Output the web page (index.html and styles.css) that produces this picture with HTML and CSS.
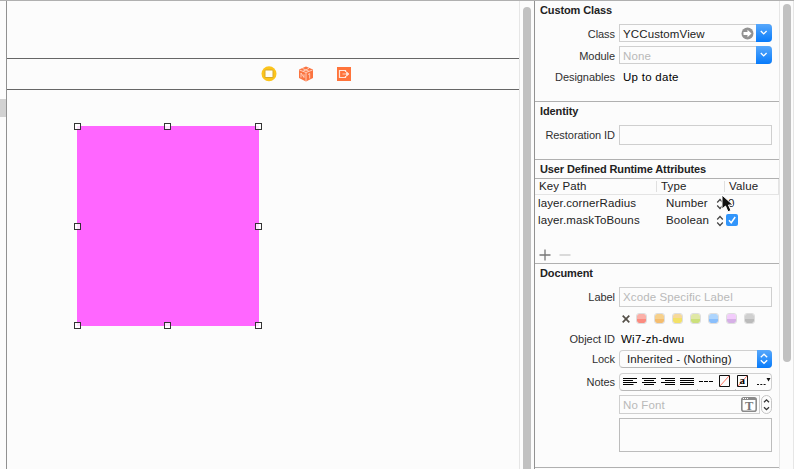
FILE: index.html
```html
<!DOCTYPE html>
<html lang="en">
<head>
<meta charset="utf-8">
<title>Identity inspector</title>
<link rel="stylesheet" href="styles.css">
</head>
<body>
<div class="window">
  <aside class="gutter"><div class="gutter-mark"></div></aside>
  <main class="canvas">
    <div class="scene-bar">
      <svg width="16" height="16" viewBox="0 0 16 16"><circle cx="8" cy="7.700" r="7.500" fill="#fcc41c"/><rect x="3.500" y="3.500" width="9" height="8.500" rx="1.500" fill="#d8a928"/><rect x="4.500" y="4.500" width="7" height="6.500" fill="#fffdf5"/></svg>
      <svg width="16" height="16" viewBox="0 0 16 16"><path d="M8 .5 15 3.500v8.500L8 15.500 1 12V3.500z" fill="#fb7440"/><path d="M1.500 4 8 6.500 14.500 4M8 6.500V15M4.500 2.500l6.500 2.800M11 2.300 5 5.300M3 7v4.500M3 7l3 4.500V8.300M10 8.500l1.700-1v5" fill="none" stroke="#ffd6c4" stroke-width=".9"/></svg>
      <svg width="16" height="16" viewBox="0 0 16 16"><path d="M1 1h14v14H1z" fill="#ff743b"/><path d="M9.500 6V4.500h-6v7h6V10" fill="none" stroke="#ffe4d8" stroke-width="1.200"/><path d="M6.500 8H12M10.500 5.800 13 8l-2.500 2.200z" fill="#ffe4d8" stroke="#ffe4d8" stroke-width=".8"/></svg>
    </div>
    <div class="stage">
      <div class="view">
        <i class="h tl"></i><i class="h tc"></i><i class="h tr"></i>
        <i class="h ml"></i><i class="h mr"></i>
        <i class="h bl"></i><i class="h bc"></i><i class="h br"></i>
      </div>
    </div>
  </main>
  <div class="scroll canvas-scroll"><div class="thumb"></div></div>
  <section class="inspector">
    <div class="section custom">
      <h2>Custom Class</h2>
      <div class="row class-row"><label>Class</label>
        <div class="combo"><span>YCCustomView</span>
          <svg class="go" width="13" height="13" viewBox="0 0 13 13"><circle cx="6.500" cy="6.500" r="6" fill="#929292"/><path d="M2.500 5h4V2.800l4 3.700-4 3.700V8h-4z" fill="#fff"/></svg>
          <b class="drop"><svg width="15" height="17" viewBox="0 0 15 17"><path d="m4.800 7 2.900 2.900L10.600 7" fill="none" stroke="#fff" stroke-width="1.300"/></svg></b></div>
      </div>
      <div class="row module-row"><label>Module</label>
        <div class="combo"><span class="hint">None</span>
          <b class="drop"><svg width="15" height="17" viewBox="0 0 15 17"><path d="m4.800 7 2.900 2.900L10.600 7" fill="none" stroke="#fff" stroke-width="1.300"/></svg></b></div>
      </div>
      <div class="row design-row"><label>Designables</label><span class="plain">Up to date</span></div>
    </div>
    <div class="section identity">
      <h2>Identity</h2>
      <div class="row restore-row"><label>Restoration ID</label><div class="field"></div></div>
    </div>
    <div class="section attributes">
      <h2>User Defined Runtime Attributes</h2>
      <div class="thead"><span>Key Path</span><span>Type</span><span>Value</span></div>
      <div class="trow"><span>layer.cornerRadius</span><span>Number</span>
        <svg class="updown" width="8" height="12" viewBox="0 0 8 12"><path d="m1.200 4.500 2.800-3 2.800 3M1.200 7.500l2.800 3 2.800-3" fill="none" stroke="#444" stroke-width="1.200"/></svg>
        <span class="value">0</span></div>
      <div class="trow"><span>layer.maskToBouns</span><span>Boolean</span>
        <svg class="updown" width="8" height="12" viewBox="0 0 8 12"><path d="m1.200 4.500 2.800-3 2.800 3M1.200 7.500l2.800 3 2.800-3" fill="none" stroke="#444" stroke-width="1.200"/></svg>
        <svg class="check" width="12" height="12" viewBox="0 0 12 12"><rect width="12" height="12" rx="2" fill="#3195fb"/><path d="M3 6.300 5.200 8.800 9.200 3" fill="none" stroke="#fff" stroke-width="1.500"/></svg></div>
      <svg class="plusminus" width="34" height="12" viewBox="0 0 34 12"><path d="M.5 6h11M6 .5v11" stroke="#777" stroke-width="1.300"/><path d="M20.500 6h11" stroke="#c8c8c8" stroke-width="1.300"/></svg>
    </div>
    <div class="section document">
      <h2>Document</h2>
      <div class="row label-row"><label>Label</label><div class="field"><span class="hint">Xcode Specific Label</span></div></div>
      <div class="swatches">
        <svg width="8" height="8" viewBox="0 0 8 8"><path d="m.7.7 6.600 6.600M7.300.7.7 7.300" stroke="#555049" stroke-width="1.700"/></svg>
        <i class="red"></i><i class="orange"></i><i class="yellow"></i><i class="green"></i><i class="blue"></i><i class="purple"></i><i class="gray"></i>
      </div>
      <div class="row object-row"><label>Object ID</label><span class="plain">Wi7-zh-dwu</span></div>
      <div class="row lock-row"><label>Lock</label>
        <div class="select"><span>Inherited - (Nothing)</span><b class="drop"><svg width="14" height="17" viewBox="0 0 14 17"><path d="m3.800 7.200 3.200-3 3.200 3M3.800 10.300l3.200 3 3.200-3" fill="none" stroke="#fff" stroke-width="1.300"/></svg></b></div>
      </div>
      <div class="row notes-row"><label>Notes</label>
        <div class="tools">
          <svg width="151" height="17" viewBox="0 0 151 17">
            <path d="M3 4.500h14M3 6.500h10M3 8.500h14M3 10.500h10.500M22 4.500h14M24 6.500h10M22 8.500h14M24 10.500h10M41 4.500h14M45 6.500h10M41 8.500h14M45 10.500h10M60 4.500h14M60 6.500h14M60 8.500h14M60 10.500h14M79 7.500h4M84 7.500h4M89 7.500h4" stroke="#000" stroke-width="1.200"/>
            <path d="m100 12 9-10M118 12l9-10" stroke="#ff7462"/><path d="M99.500 1.500h10v11h-10zM117.500 1.500h10v11h-10z" fill="none" stroke="#111"/>
            <text x="119.500" y="10" font-family="Liberation Serif" font-size="11" font-weight="bold">a</text>
            <path d="M137 10h2v1h-2zM140.300 10h2v1h-2zM143.600 10h2v1h-2zM146.500 4h4l-2 3.500z" fill="#111"/>
            <path d="M20.500 15v2M39.500 15v2M58.500 15v2M77.500 15v2M96.500 15v2M115.500 15v2" stroke="#ccc"/>
          </svg>
        </div>
      </div>
      <div class="font-row">
        <div class="font-field"><span class="hint">No Font</span>
          <svg width="16" height="15" viewBox="0 0 16 15"><rect x=".8" y=".8" width="14.400" height="13.400" rx="2" fill="#fff" stroke="#8b8b8b" stroke-width="1.600"/><path d="M1 1h14v2H1z" fill="#8b8b8b"/><path d="M2 1.500h1M4 1.500h1M6 1.500h1" stroke="#fff"/><text x="3.900" y="12.500" font-family="Liberation Serif" font-size="12.500" font-weight="bold" fill="#777">T</text></svg></div>
        <div class="stepper"><svg width="9" height="17" viewBox="0 0 9 17"><path d="M2 6.300 4.500 3.800 7 6.300M2 11.200l2.500 2.500L7 11.200" fill="none" stroke="#333" stroke-width="1.300"/></svg></div>
      </div>
      <div class="notes-area"></div>
    </div>
  </section>
  <div class="scroll panel-scroll"><div class="thumb"></div></div>
</div>
<svg class="cursor" width="14" height="20" viewBox="0 0 14 20"><path d="M1 1v14l3.500-3 2.500 5.800 3-1.300-2.500-5.500H12z" fill="#111" stroke="#fff" stroke-width="1"/></svg>
</body>
</html>
```

FILE: styles.css
```css
* { box-sizing: border-box; }
body { margin: 0; background: #fcfcfc; font: 11.5px/14px "Liberation Sans", Arial, sans-serif; color: #222; letter-spacing: .12px; overflow: hidden; }
svg { display: block; flex: none; }
span, label, h2 { white-space: nowrap; }
.window { display: flex; width: 794px; height: 469px; border-top: 1px solid #b0b0b0; }
.gutter { width: 7px; border-right: 1px solid #919191; padding-top: 98px; }
.gutter-mark { height: 18px; background: #d2d2d2; }
.canvas { width: 512px; padding-top: 57px; }
.scene-bar { height: 32px; border: solid #666; border-width: 1px 0; display: flex; gap: 21px; padding: 7px 0 0 254px; }
.scene-bar svg:last-child { margin-left: 1px; }
.stage { padding: 36px 0 0 70px; }
.view { position: relative; width: 182px; height: 200px; background: #ff66ff; }
.h { position: absolute; width: 7px; height: 7px; border: 1px solid #333; background: rgba(255,255,255,.8); }
.tl, .tc, .tr { top: -3px; }
.ml, .mr { top: 97px; }
.bl, .bc, .br { bottom: -3px; }
.tl, .ml, .bl { left: -3px; }
.tc, .bc { left: 87px; }
.tr, .mr, .br { right: -3px; }
.scroll { width: 15px; border-left: 1px solid #e6e6e6; }
.thumb { width: 8px; background: #c1c1c1; border-radius: 4px; }
.canvas-scroll { padding: 6px 0 0 3px; }
.canvas-scroll .thumb { height: 472px; }
.panel-scroll { border-right: 1px solid #e6e6e6; padding: 3px 0 0 3px; }
.panel-scroll .thumb { height: 358px; }
.inspector { width: 245px; border-left: 1px solid #929292; }
.section { border-bottom: 1px solid #b0b0b0; }
.custom { height: 101px; }
.identity { height: 58px; }
.attributes { height: 104px; }
.document { height: 204px; }
h2 { margin: 0; padding: 2px 0 0 5px; height: 18px; font-size: 11px; line-height: 14px; font-weight: bold; letter-spacing: -.11px; }
.row { display: flex; align-items: center; gap: 4px; }
.row label { width: 80px; text-align: right; font-size: 11px; color: #303030; letter-spacing: -.05px; }
.hint { color: #b9b9b9; }
.plain { color: #000; letter-spacing: .27px; }
.class-row { height: 18px; margin-top: 5px; }
.module-row { height: 18px; margin-top: 4px; }
.class-row label, .module-row label { padding-top: 2px; }
.design-row { height: 14px; margin-top: 6px; }
.combo { display: flex; align-items: center; width: 153px; height: 18px; border: 1px solid #cfcfcf; border-right: 0; padding-left: 3px; border-radius: 0 4px 4px 0; }
.combo span { flex: 1; padding-top: 2px; }
.combo .go { margin: 1px 2px 0 0; }
.combo .drop { height: 18px; margin: -1px 0; width: 16px; border-radius: 0 4px 4px 0; }
.drop { background: linear-gradient(#58a8fb, #077bfb); }
.field { width: 153px; height: 20px; border: 1px solid #cfcfcf; padding: 2px 3px; }
.restore-row { margin-top: 5px; height: 20px; }
.attributes h2 { height: 19px; border-bottom: 1px solid #b0b0b0; }
.thead { display: grid; grid-template-columns: 121px 68px 1fr; height: 16px; border-bottom: 1px solid #e4e4e4; line-height: 15px; box-shadow: inset -1px 0 #e4e4e4; }
.thead span { padding-left: 4px; }
.thead span + span { padding-left: 5px; background: linear-gradient(#e0e0e0, #e0e0e0) 0 2px / 1px 11px no-repeat; }
.trow { display: grid; grid-template-columns: 128px 50px 10px 1fr; align-items: center; height: 17px; padding-left: 3px; }
.trow span { line-height: 16px; padding-bottom: 1px; }
.check { margin-bottom: 1px; }
.trow .value { padding-left: 2px; }
.plusminus { margin: 20px 0 0 4px; }
.label-row { margin-top: 5px; }
.swatches { display: flex; align-items: center; margin: 5px 0 0 87px; height: 12px; gap: 7px; }
.swatches svg { margin: 1px -1px 0 0; }
.swatches i { width: 11px; height: 11px; border: 1px solid #dedede; border-radius: 3px; background-clip: padding-box; }
.red { background: linear-gradient(#fbb0a8 55%, #fb8b80 55%); }
.orange { background: linear-gradient(#f6d08c 55%, #f4bd6f 55%); }
.yellow { background: linear-gradient(#f6d99a 50%, #f3e168 50%); }
.green { background: linear-gradient(#e0e8a6 55%, #cce07c 55%); }
.blue { background: linear-gradient(#aed5fd 55%, #8abffc 55%); }
.purple { background: linear-gradient(#f2ccfb 55%, #d6b0e6 55%); }
.gray { background: linear-gradient(#d0d0d0 55%, #bbb 55%); }
.object-row { height: 14px; margin-top: 8px; }
.object-row .plain { margin-left: 2px; }
.design-row .plain { margin-left: 4px; }
.lock-row { height: 18px; margin-top: 4px; }
.select { display: flex; align-items: center; justify-content: space-between; width: 153px; height: 18px; border: 1px solid #d0d0d0; border-bottom-color: #b8b8b8; border-radius: 4px; padding-left: 7px; }
.select .drop { width: 15px; height: 18px; margin: -1px; border-radius: 0 4px 4px 0; }
.notes-row { height: 18px; margin-top: 5px; }
.tools { width: 153px; height: 18px; border: 1px solid #d0d0d0; border-bottom-color: #b8b8b8; border-radius: 4px; overflow: hidden; }
.font-row { display: flex; gap: 1px; margin: 4px 0 0 84px; height: 19px; }
.font-field { display: flex; align-items: center; justify-content: space-between; width: 141px; border: 1px solid #cfcfcf; padding: 0 2px 0 3px; }
.stepper { width: 11px; border: 1px solid #c5c5c5; border-radius: 6px; }
.notes-area { margin: 4px 0 0 84px; width: 153px; height: 34px; border: 1px solid #bcbcbc; }
.cursor { position: absolute; left: 721px; top: 194px; }
```
